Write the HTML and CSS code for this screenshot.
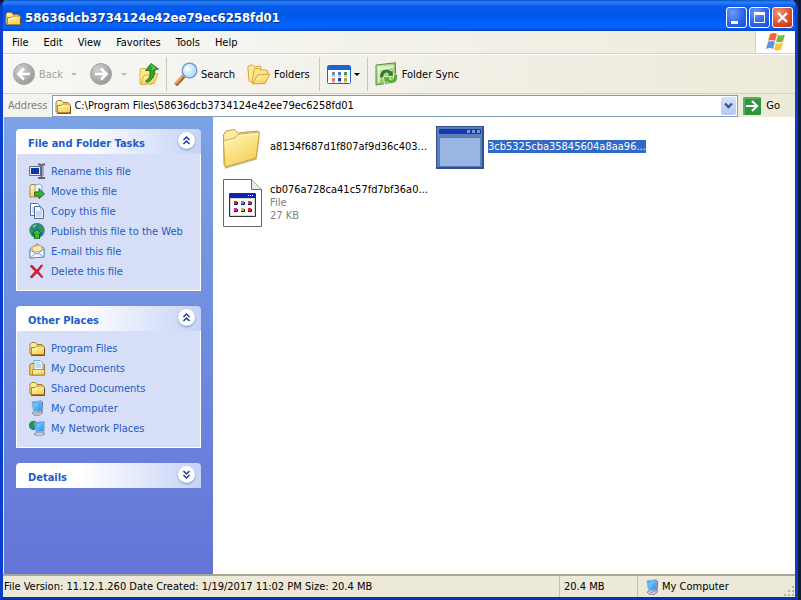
FILE: index.html
```html
<!DOCTYPE html>
<html lang="en">
<head>
<meta charset="utf-8">
<title>58636dcb3734124e42ee79ec6258fd01</title>
<link rel="stylesheet" href="styles.css">
</head>
<body>
<svg class="defs" aria-hidden="true">
  <defs>
    <linearGradient id="gold" x1="0" y1="0" x2="0.6" y2="1"><stop offset="0" stop-color="#fffabf"/><stop offset="1" stop-color="#f6cf55"/></linearGradient>
    <radialGradient id="grey" cx="0.35" cy="0.3" r="0.8"><stop offset="0" stop-color="#d2d2d0"/><stop offset="1" stop-color="#929290"/></radialGradient>
    <radialGradient id="lens" cx="0.35" cy="0.35" r="0.8"><stop offset="0" stop-color="#fff"/><stop offset="1" stop-color="#8ed0fa"/></radialGradient>
    <linearGradient id="screen" x1="0" y1="0" x2="1" y2="1"><stop offset="0" stop-color="#1f78e0"/><stop offset="0.5" stop-color="#58b8f8"/><stop offset="1" stop-color="#2f7fd4"/></linearGradient>
    <linearGradient id="sync" x1="0" y1="0" x2="1" y2="1"><stop offset="0" stop-color="#d6ebba"/><stop offset="1" stop-color="#6fb040"/></linearGradient>
    <symbol id="folder" viewBox="0 0 16 16">
      <path d="M1 14V4l1.500-1.500h4L8 4.500h5l1.500 1.500v8z" fill="#fbeb9c" stroke="#a87f28"/>
      <path d="M2.500 14.500V7.500H6l1.500-1.500h7l1 1v7.500z" fill="url(#gold)" stroke="#b8862a"/>
      <path d="M2 15.500h13.500V8" fill="none" stroke="#5d4718" stroke-width="0.900"/>
    </symbol>
    <symbol id="computer" viewBox="0 0 16 16">
      <path d="M3 13l4-2h4l3 1.500-4 3-4 .5z" fill="#c9ccda" stroke="#737a94" stroke-width="0.800"/>
      <path d="M12 1.500l2 .5-.5 9-2 1.500z" fill="#5f6898"/>
      <path d="M3 2l9.500-1.500-.5 10.500-7.500.5z" fill="url(#screen)" stroke="#94b0da" stroke-width="0.900"/>
      <path d="M4 3l6-1-5 6z" fill="#a9dcff" opacity="0.500"/>
      <path d="M6 14l5-2" stroke="#9290b0"/>
    </symbol>
  </defs>
</svg>
<div class="window">
  <header class="titlebar">
    <svg class="i16"><use href="#folder"/></svg>
    <h1>58636dcb3734124e42ee79ec6258fd01</h1>
    <div class="controls">
      <button class="ctl" aria-label="Minimize"><svg viewBox="0 0 19 19"><path d="M4 13h7v3H4z" fill="#fff"/></svg></button>
      <button class="ctl" aria-label="Maximize"><svg viewBox="0 0 19 19"><path d="M4 4h11v11H4zM5 7v7h9V7z" fill="#fff" fill-rule="evenodd"/></svg></button>
      <button class="ctl close" aria-label="Close"><svg viewBox="0 0 19 19"><path d="M5 5l9 9M14 5l-9 9" stroke="#fff" stroke-width="2.200"/></svg></button>
    </div>
  </header>
  <nav class="menubar">
    <button>File</button><button>Edit</button><button>View</button><button>Favorites</button><button>Tools</button><button>Help</button>
    <span class="flag"><svg viewBox="0 0 20 20">
      <path d="M4 2q4-2 7 0l-2 7q-3-2-7 0z" fill="#ee6a3c"/><path d="M12 3q3 1 7-0.500l-2 7q-4 1.500-7 0z" fill="#79b842"/>
      <path d="M2 10q3-2 7 0l-2 7q-3-2-7 0z" fill="#5e94e4"/><path d="M10 11q3 1.500 7-0.500l-2 7q-4 2-7 0z" fill="#f8c62e"/></svg></span>
  </nav>
  <div class="toolbar">
    <button class="tool back" disabled><svg class="i24" viewBox="0 0 24 24"><circle cx="12" cy="12" r="10.500" fill="url(#grey)" stroke="#a4a4a1"/><path d="M18 12H7M12 6.500L6.500 12l5.500 5.500" fill="none" stroke="#fff" stroke-width="2.600"/></svg>Back</button>
    <button class="drop" disabled aria-label="Back history"><i class="tri"></i></button>
    <button class="tool forward" disabled aria-label="Forward"><svg class="i24" viewBox="0 0 24 24"><circle cx="12" cy="12" r="10.500" fill="url(#grey)" stroke="#a4a4a1"/><path d="M6 12h11M12 6.500l5.500 5.500-5.500 5.500" fill="none" stroke="#fff" stroke-width="2.600"/></svg></button>
    <button class="drop" disabled aria-label="Forward history"><i class="tri"></i></button>
    <button class="tool up" aria-label="Up"><svg class="i24" viewBox="0 0 24 24">
      <path d="M5 22V8l1-1.500h4L12 8h8v4l-3 10z" fill="#fbe68c" stroke="#e0b64e"/><path d="M5.500 22.500l3.500-9 14-2-4 10z" fill="url(#gold)" stroke="#dcae42"/>
      <path d="M10.500 19q6-3 4-10.500H10.500L16 1.500 23.500 7l-4 1q1 9-7.500 12.500z" fill="#2fa52c" stroke="#14701a" stroke-width="0.800"/><path d="M16 3l4 3.500-3 .5" fill="none" stroke="#84dc6c"/></svg></button>
    <span class="sep"></span>
    <button class="tool search"><svg class="i24" viewBox="0 0 24 24"><path d="M1.500 23l8.500-9" stroke="#a9653a" stroke-width="4.200"/><path d="M1 22l8-8.500" stroke="#eda878" stroke-width="2"/><circle cx="15.500" cy="8.500" r="7.200" fill="url(#lens)" stroke="#7898cf" stroke-width="1.600"/><circle cx="15.500" cy="8.500" r="6" fill="none" stroke="#d5ecff" stroke-width="0.800"/></svg>Search</button>
    <button class="tool folders"><svg class="i24" viewBox="0 0 24 24">
      <path d="M2 19L.8 5l1-1.500 4-.5L7.500 5l6-1 1 12L4 20z" fill="#fce994" stroke="#dca63c"/><path d="M5 21L7 8l1-1.500h4L13.500 8h6.500l1 3-4 10z" fill="#fbe486" stroke="#dca63c"/><path d="M5.500 22l5-9L23 12l-5 9.500z" fill="url(#gold)" stroke="#d9a037"/></svg>Folders</button>
    <span class="sep"></span>
    <button class="tool views" aria-label="Views"><svg class="i24" viewBox="0 0 24 24">
      <rect x="0.500" y="3.500" width="23" height="18" rx="1" fill="#fff" stroke="#2864be"/><path d="M1 4h22v4H1z" fill="#1f66ce"/>
      <path d="M5 10h3v3H5z" fill="#5d8bb8"/><path d="M11 10h3v3h-3z" fill="#4577d8"/><path d="M17 10h3v3h-3z" fill="#429c4f"/><path d="M5 16h3v3H5z" fill="#e77a59"/><path d="M11 16h3v3h-3z" fill="#153bab"/><path d="M17 16h3v3h-3z" fill="#b5a52c"/><path d="M5 14h3M11 14h3M17 14h3M5 20h3M11 20h3M17 20h3" stroke="#777" stroke-width="0.800"/></svg><i class="tri"></i></button>
    <span class="sep"></span>
    <button class="tool sync"><svg class="i24" viewBox="0 0 24 24">
      <path d="M1 3L20.500.8V20L1 23z" fill="url(#sync)" stroke="#4c9733"/><path d="M3 5l15.500-2v3L5 8v12l-2 .5z" fill="#fff" opacity="0.600"/>
      <path d="M4.500 16Q4 7.500 11.500 7q3 0 4.500 2l2-1.500.5 7-7-.5 2-2q-1-1.200-2.500-1-2.500.5-2 5z" fill="#2f8422" stroke="#eef8e4" stroke-width="0.800"/>
      <path d="M22.500 12q1.500 8.500-6 9.500-3.500.3-5-1.700L9.500 22l-1-7.500 7.500.5-2 2q1 1 2.700.8 2.500-.8 1.800-5.300z" fill="#58ab35" stroke="#eef8e4" stroke-width="0.800"/></svg>Folder Sync</button>
  </div>
  <form class="addressbar">
    <label for="address">Address</label>
    <div class="combo">
      <svg class="i16"><use href="#folder"/></svg>
      <input id="address" type="text" value="C:\Program Files\58636dcb3734124e42ee79ec6258fd01">
      <button type="button" class="expand" aria-label="Show addresses"><svg viewBox="0 0 15 17"><path d="M4 6.500l3.500 3.500L11 6.500" fill="none" stroke="#42587f" stroke-width="2.400"/></svg></button>
    </div>
    <button type="button" class="go"><svg viewBox="0 0 18 18"><rect width="18" height="18" rx="1.500" fill="#2f9639"/><path d="M1 17V1h16" fill="none" stroke="#82c786"/><path d="M3 9h11M9 4l5 5-5 5" fill="none" stroke="#fff" stroke-width="2.200"/></svg>Go</button>
  </form>
  <main class="content">
    <aside class="sidebar">
      <section class="panel">
        <header><h2>File and Folder Tasks</h2><button class="chev" aria-label="Collapse"><svg viewBox="0 0 17 17"><path d="M5.500 8l3-3 3 3M5.500 12l3-3 3 3" fill="none" stroke="#1a3e87" stroke-width="1.500"/></svg></button></header>
        <ul>
          <li><a href="#"><svg class="i16" viewBox="0 0 16 16"><path d="M.5 3.500h11v9H.5z" fill="#e8edf8" stroke="#6b7187"/><path d="M2 5h8v6H2z" fill="#1238a8"/><path d="M9 1.500h2l1.500 1 1.500-1h2M12.500 2v12M9 15h2l1.500-1 1.500 1h2" fill="none" stroke="#5b6170" stroke-width="1.800"/><path d="M14 3v10" stroke="#9ca2b0" stroke-width="1.500"/></svg>Rename this file</a></li>
          <li><a href="#"><svg class="i16" viewBox="0 0 16 16"><path d="M1 14V3l1-1.500h4l1 1.500h5v11z" fill="url(#gold)" stroke="#a38647"/><path d="M6 2l5-1 2 2v6H6z" fill="#edf5ff" stroke="#7b92b5" stroke-width="0.800"/><path d="M5.500 9H10V5.500l5.500 5.500-5.500 4.700V13H5.500z" fill="#3ead35" stroke="#166b18" stroke-width="0.900"/></svg>Move this file</a></li>
          <li><a href="#"><svg class="i16" viewBox="0 0 16 16"><path d="M1.500.5h7l2 2v10h-9z" fill="#fff" stroke="#5475a8"/><path d="M5.500 3.500h6l3 3v9h-9z" fill="#eef6ff" stroke="#4569a1"/><path d="M11.500 4v3h3M7 9h6M7 11h6M7 13h6M3 5h2M3 7h2M3 9h2" fill="none" stroke="#8db0dc" stroke-width="0.900"/></svg>Copy this file</a></li>
          <li><a href="#"><svg class="i16" viewBox="0 0 16 16"><circle cx="8" cy="7.500" r="7.300" fill="#2878c3" stroke="#245894" stroke-width="0.500"/><path d="M1 5q4-5 7-4l-1 4-4 1 2 4-2 2q-3-3-2-7zM10 1q5 1 5.500 7l-3 2-3-4z" fill="#2f9a44"/><path d="M4 4l3-2" stroke="#b5ebff"/><path d="M8 6l5 5h-2.500v5h-5v-5H3z" fill="#40b637" stroke="#11651a" stroke-width="0.900"/></svg>Publish this file to the Web</a></li>
          <li><a href="#"><svg class="i16" viewBox="0 0 16 16"><path d="M1 6l7-5 7 4v9L1 15z" fill="#dce9fa" stroke="#6985ae"/><path d="M3 4l9-2 1 6-9 1z" fill="#ffe7a3" stroke="#c9a666" stroke-width="0.800"/><path d="M1 7l7 4 7-5v8L1 15z" fill="#eff7ff" stroke="#5d80b0" stroke-width="0.800"/><path d="M1 15l6-5M15 14l-6-4" stroke="#7894bc" stroke-width="0.800"/></svg>E-mail this file</a></li>
          <li><a href="#"><svg class="i16" viewBox="0 0 16 16"><path d="M1 3l2-1 5 5 4-5h2L9.500 8.500 14 14l-1 1-5-5-5 5-2-1 5-5.500z" fill="#d41c3c" stroke="#a8152e" stroke-width="0.500"/></svg>Delete this file</a></li>
        </ul>
      </section>
      <section class="panel">
        <header><h2>Other Places</h2><button class="chev" aria-label="Collapse"><svg viewBox="0 0 17 17"><path d="M5.500 8l3-3 3 3M5.500 12l3-3 3 3" fill="none" stroke="#1a3e87" stroke-width="1.500"/></svg></button></header>
        <ul>
          <li><a href="#"><svg class="i16"><use href="#folder"/></svg>Program Files</a></li>
          <li><a href="#"><svg class="i16" viewBox="0 0 16 16"><path d="M.8 15V5L2 3.500h12L15.500 5v10z" fill="#f4cf64" stroke="#a8781c"/><path d="M5 .5h6l3 3V10H5z" fill="#f7fbff" stroke="#6e93bd" stroke-width="0.800"/><path d="M6.500 3h4M6.500 5h6M6.500 7h6" stroke="#79b4e4" stroke-width="0.900"/><path d="M3.500 9.500h12V15h-12z" fill="url(#gold)" stroke="#a37b2b" stroke-width="0.800"/></svg>My Documents</a></li>
          <li><a href="#"><svg class="i16"><use href="#folder"/></svg>Shared Documents</a></li>
          <li><a href="#"><svg class="i16"><use href="#computer"/></svg>My Computer</a></li>
          <li><a href="#"><svg class="i16" viewBox="0 0 16 16"><circle cx="4.500" cy="5.500" r="4.500" fill="#2477b2"/><path d="M1 3q2-3 5.500-2L5 6 3 9.500Q-1 7 1 3z" fill="#259b38"/><path d="M5 14l4-2h4l3 1.500-4 2.500H7z" fill="#c9ccda" stroke="#737a94" stroke-width="0.800"/><path d="M5.500 2.500l10-1-.5 10-8 .5z" fill="url(#screen)" stroke="#94b0da" stroke-width="0.900"/><path d="M7 3.500l6-.5-5 5z" fill="#a9dcff" opacity="0.500"/></svg>My Network Places</a></li>
        </ul>
      </section>
      <section class="panel">
        <header><h2>Details</h2><button class="chev" aria-label="Expand"><svg viewBox="0 0 17 17"><path d="M5.500 5l3 3 3-3M5.500 9l3 3 3-3" fill="none" stroke="#1a3e87" stroke-width="1.500"/></svg></button></header>
      </section>
    </aside>
    <div class="files">
      <div class="file"><svg class="i48" viewBox="0 0 48 48">
        <path d="M7 45l31-9 3-22" fill="none" stroke="#b9b39a" stroke-width="1.500"/>
        <path d="M6 42L5.500 12 8 8l8-1.500 4 3.500 20-2 1 2-4 24z" fill="#fbeb9e" stroke="#c19c3a"/>
        <path d="M7 44L5.500 18 17 15l3-3.500L41.500 9 38 35z" fill="url(#gold)" stroke="#cfa740"/><path d="M7 19l11-3 3-3.500L40 10.500" fill="none" stroke="#fffde0"/></svg>
        <div class="name">a8134f687d1f807af9d36c403...</div></div>
      <div class="file selected"><svg class="i48" viewBox="0 0 48 48">
        <rect x="0" y="3" width="48" height="43" fill="#30508e"/><path d="M1 4h45v40H1z" fill="#5c80ba"/><path d="M3 6h42v5H3z" fill="#1637b7"/><path d="M31 7h3v3h-3zM36 7h3v3h-3zM41 7h3v3h-3z" fill="#8095d0"/><path d="M4 15h40v28H4z" fill="#98b5e3"/><path d="M3.500 43V14.500H44" fill="none" stroke="#547bb5"/></svg>
        <div class="name"><mark>3cb5325cba35845604a8aa96...</mark></div></div>
      <div class="file"><svg class="i48" viewBox="0 0 48 48">
        <path d="M5.500.5h28l10 10v37h-38z" fill="#fff" stroke="#686868"/><path d="M33.500.5v10h10" fill="#e8e8e8" stroke="#686868"/>
        <path d="M11.500 14.500h26v23h-26z" fill="#d8d8d0" stroke="#333"/><path d="M12 15h25v4H12z" fill="#1024a8"/><path d="M13 20h23v16H13z" fill="#fff"/><path d="M30 16h1v1h-1zM32 16h1v1h-1zM34 16h1v1h-1z" fill="#fff"/>
        <path d="M16 22h3v3h-3z" fill="#d5252d"/><path d="M23 22h3v3h-3z" fill="#1aacb0"/><path d="M30 22h3v3h-3z" fill="#e0352d"/><path d="M16 29h3v3h-3z" fill="#c52b9c"/><path d="M23 29h3v3h-3z" fill="#d5b722"/><path d="M30 29h3v3h-3z" fill="#d62c34"/>
        <path d="M16 25.500h3.500V23M23 25.500h3.500V23M30 25.500h3.500V23M16 32.500h3.500V30M23 32.500h3.500V30M30 32.500h3.500V30" fill="none" stroke="#181870"/></svg>
        <div class="name">cb076a728ca41c57fd7bf36a0...<small>File</small><small>27 KB</small></div></div>
    </div>
  </main>
  <footer class="status">
    <span class="info">File Version: 11.12.1.260 Date Created: 1/19/2017 11:02 PM Size: 20.4 MB</span>
    <span class="size">20.4 MB</span>
    <span class="zone"><svg class="i16"><use href="#computer"/></svg>My Computer</span>
    <svg class="grip" viewBox="0 0 12 12"><path d="M9 1h2v2H9zM5 5h2v2H5zM9 5h2v2H9zM1 9h2v2H1zM5 9h2v2H5zM9 9h2v2H9z" fill="#b8b5a2"/></svg>
  </footer>
</div>
</body>
</html>
```
FILE: styles.css
```css
* { box-sizing: border-box; }
body { margin: 0; background: #101c38; font: 11px/13px Tahoma, "DejaVu Sans Condensed", sans-serif; color: #000; }
button, input { font: inherit; color: inherit; background: none; border: 0; padding: 0; margin: 0; }
svg { display: block; flex: none; }
h1, h2, ul { margin: 0; padding: 0; }
.defs { position: absolute; width: 0; height: 0; }
.i16 { width: 16px; height: 16px; }
.i24 { width: 24px; height: 24px; }
.i48 { width: 48px; height: 48px; }

.window { height: 100vh; margin-right: 3px; display: flex; flex-direction: column; border: solid #0a3fd0; border-width: 0 3px 3px; border-bottom-color: #0831b8; border-radius: 7px 7px 0 0; background: #efecdf; overflow: hidden; }
.titlebar { height: 31px; flex: none; display: flex; align-items: center; gap: 4px; padding: 4px 3px 0 3px; margin: 0 -1px; background: linear-gradient(#0a4fc4 0, #2a83f8 2px, #0b5cec 6px, #0055e5 14px, #0462fb 24px, #0461f8 28px, #0042c8 31px); }
.titlebar h1 { flex: 1; font-size: 13px; line-height: 16px; font-weight: bold; color: #fff; text-shadow: 1px 1px #0f2f86; }
.controls { display: flex; gap: 2px; }
.ctl { width: 21px; height: 21px; border: 1px solid #fff; border-radius: 3px; background: radial-gradient(circle at 30% 25%, #6c9bf8, #2b60e8 60%, #1c4ed2); }
.ctl.close { background: radial-gradient(circle at 30% 25%, #f0957a, #de4a23 60%, #bf3413); }

.menubar { height: 23px; flex: none; display: flex; align-items: stretch; gap: 15px; padding-left: 9px; background: linear-gradient(90deg, #f8f8f6, #eeebdc); border-bottom: 1px solid #d5d2c2; }
.flag { width: 40px; margin-left: auto; display: flex; justify-content: center; align-items: center; background: #fff; border-left: 1px solid #d5d2c2; }
.flag svg { width: 20px; height: 20px; }

.toolbar { height: 40px; flex: none; display: flex; align-items: center; padding: 0 9px; background: linear-gradient(90deg, #f7f7f5, #edeada); border-top: 1px solid #fff; border-bottom: 1px solid #d5d2c2; }
.tool { display: flex; align-items: center; gap: 3px; white-space: nowrap; }
.tool:disabled { color: #a3a29a; }
.drop { width: 22px; display: flex; justify-content: center; }
.tri { border: solid transparent; border-width: 3px 3px 0; border-top-color: #000; }
.drop .tri { border-top-color: #bab9b0; }
.forward { margin-left: 4px; }
.sep { width: 1px; height: 34px; margin: 0 7px; background: #cbc8b8; }
.folders { margin: 0 2px 0 12px; }

.addressbar { height: 23px; flex: none; display: flex; align-items: center; gap: 5px; padding-left: 5px; background: linear-gradient(90deg, #f3f3f0, #edeada); }
.addressbar label { color: #7f7f7a; }
.combo { flex: 1; height: 22px; display: flex; align-items: center; gap: 3px; padding: 0 1px 0 2px; background: #fff; border: 1px solid #7f9db9; }
.combo input { flex: 1; min-width: 0; outline: 0; }
.expand { width: 15px; height: 18px; border-radius: 2px; background: linear-gradient(#d5e1fd, #b4c8f6); }
.go { display: flex; align-items: center; gap: 5px; margin-right: 15px; }
.go svg { width: 18px; height: 18px; }

.content { flex: 1; min-height: 0; display: flex; background: #fff; border-left: 1px solid #dce6fa; }
.sidebar { width: 209px; flex: none; display: flex; flex-direction: column; gap: 15px; padding: 12px; background: linear-gradient(#7ba2e7, #6375d6); }
.panel header { height: 25px; display: flex; align-items: center; justify-content: space-between; padding: 0 6px 2px 12px; border-radius: 4px 4px 0 0; background: linear-gradient(90deg, #fff 35%, #c6d3f7); }
.panel h2 { font-size: 11px; line-height: 13px; color: #215dc6; padding-top: 5px; }
.chev { width: 17px; height: 17px; border-radius: 50%; background: #fff; box-shadow: 0 1px 2px #7d8fbd; }
.panel ul { list-style: none; padding: 7px 12px 9px; background: #d6dff7; border: solid #fff; border-width: 0 1px 1px; }
.panel a { height: 20px; display: flex; align-items: center; gap: 6px; color: #215dc6; text-decoration: none; white-space: nowrap; }

.files { flex: 1; display: grid; grid-template-columns: repeat(auto-fill, 218px); grid-auto-rows: 48px; gap: 8px 0; padding: 6px 0 0 5px; }
.file { display: flex; align-items: center; gap: 4px; }
.name { white-space: nowrap; padding-bottom: 2px; }
.name small { display: block; font-size: inherit; color: #808080; }
mark { background: #316ac5; color: #fff; }

.status { height: 23px; flex: none; display: flex; align-items: stretch; border-top: 2px solid #a9a696; background: #ece9d8; white-space: nowrap; }
.status span { display: flex; align-items: center; }
.info { flex: 1; padding-left: 1px; }
.size { width: 78px; padding-left: 4px; border-left: 1px solid #c5c2b2; }
.zone { width: 146px; gap: 2px; padding-left: 6px; border-left: 1px solid #c5c2b2; }
.grip { width: 12px; height: 12px; align-self: flex-end; }
```
